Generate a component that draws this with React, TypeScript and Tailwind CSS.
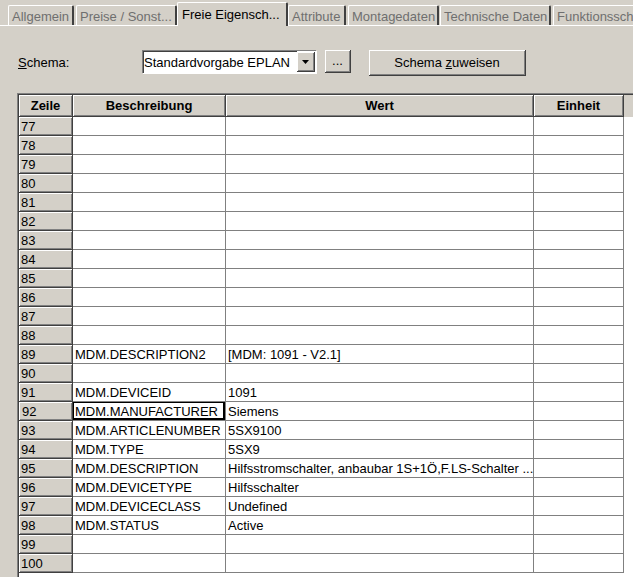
import React from 'react';

type Row = { nr: number; name?: string; value?: string };

const rows: Row[] = [
  ...Array.from({ length: 12 }, (_, i) => ({ nr: 77 + i })),
  { nr: 89, name: 'MDM.DESCRIPTION2', value: '[MDM: 1091 - V2.1]' },
  { nr: 90 },
  { nr: 91, name: 'MDM.DEVICEID', value: '1091' },
  { nr: 92, name: 'MDM.MANUFACTURER', value: 'Siemens' },
  { nr: 93, name: 'MDM.ARTICLENUMBER', value: '5SX9100' },
  { nr: 94, name: 'MDM.TYPE', value: '5SX9' },
  { nr: 95, name: 'MDM.DESCRIPTION', value: 'Hilfsstromschalter, anbaubar 1S+1Ö,F.LS-Schalter ...' },
  { nr: 96, name: 'MDM.DEVICETYPE', value: 'Hilfsschalter' },
  { nr: 97, name: 'MDM.DEVICECLASS', value: 'Undefined' },
  { nr: 98, name: 'MDM.STATUS', value: 'Active' },
  { nr: 99 },
  { nr: 100 },
];

const tabs = [
  { label: 'Allgemein', w: 'w-[66px]', ml: 'ml-[8px]' },
  { label: 'Preise / Sonst...', w: 'w-[101px]', ml: 'ml-[2px]' },
  { label: 'Freie Eigensch...', w: 'w-[111px]', ml: 'ml-0', active: true },
  { label: 'Attribute', w: 'w-[58px]', ml: 'ml-0' },
  { label: 'Montagedaten', w: 'w-[91px]', ml: 'ml-[2px]' },
  { label: 'Technische Daten', w: 'w-[111px]', ml: 'ml-[1px]' },
  { label: 'Funktionsschaltbild', w: 'w-[100px]', ml: 'ml-[2px]' },
];

const raised = 'border-r border-b border-[#404040] shadow-[inset_1px_1px_0_#fff,inset_-1px_-1px_0_#808080]';

const App: React.FC = () => {
  return (
    <div className="w-[633px] h-[577px] overflow-hidden bg-[#d4d0c8] text-[13px] leading-none text-black font-['Liberation_Sans',Arial,sans-serif]">
      {/* Reiter */}
      <div className="flex items-end h-[26px] border-b border-white">
        {tabs.map((t) =>
          t.active ? (
            <div
              key={t.label}
              className={`${t.w} ${t.ml} shrink-0 h-[24px] -mb-px bg-[#d4d0c8] border-t border-l border-white border-r-2 border-r-[#404040] rounded-t-[2px] pl-[4px] pt-[5px] whitespace-nowrap overflow-hidden`}
            >
              {t.label}
            </div>
          ) : (
            <div
              key={t.label}
              className={`${t.w} ${t.ml} shrink-0 h-[20px] border-t border-l border-white border-r-2 border-r-[#404040] rounded-t-[2px] pl-[3px] pt-[4px] text-[#6f6f6f] whitespace-nowrap overflow-hidden`}
            >
              {t.label}
            </div>
          )
        )}
      </div>

      {/* Schema */}
      <div className="flex items-start mt-[24px] h-[26px]">
        <div className="ml-[18px] w-[124px] pt-[6px]">
          <span className="underline">S</span>chema:
        </div>
        <div className="w-[174px] h-[23px] flex bg-white border-t border-l border-[#808080] shadow-[1px_1px_0_#fff]">
          <div className="flex-1 flex items-center border-t border-l border-[#404040]">Standardvorgabe EPLAN</div>
          <div className="w-[18px] h-[20px] mt-px mr-px flex items-center justify-center bg-[#d4d0c8] border-r border-b border-[#404040] shadow-[inset_1px_1px_0_#fff,inset_-1px_-1px_0_#808080]">
            <svg width="7" height="4" viewBox="0 0 7 4">
              <path d="M0 0h7L3.5 4z" fill="#000" />
            </svg>
          </div>
        </div>
        <button className={`ml-[9px] w-[26px] h-[23px] bg-[#d4d0c8] ${raised} flex items-center justify-center pb-[2px]`}>
          ...
        </button>
        <button className={`ml-[18px] w-[157px] h-[26px] bg-[#d4d0c8] ${raised} flex items-center justify-center`}>
          Schema&nbsp;<span className="underline">z</span>uweisen
        </button>
      </div>

      {/* Tabelle */}
      <div className="mt-[17px] ml-[17px] h-[500px] bg-white border-l border-t border-[#808080]">
        <div className="h-full border-l border-t border-[#404040]">
          <div className="flex h-[22px] bg-[#d4d0c8] font-bold">
            <div className={`w-[54px] ${raised} flex items-center justify-center`}>Zeile</div>
            <div className={`w-[153px] ${raised} flex items-center justify-center`}>Beschreibung</div>
            <div className={`w-[308px] ${raised} flex items-center justify-center`}>Wert</div>
            <div className={`w-[90px] ${raised} flex items-center justify-center`}>Einheit</div>
          </div>
          {rows.map((r) => (
            <div key={r.nr} className="flex h-[19px]">
              <div className={`w-[54px] bg-[#d4d0c8] ${raised} flex items-center ${r.nr === 92 ? 'pl-[3px] pt-px' : 'pl-[2px]'}`}>
                {r.nr}
              </div>
              <div
                className={`w-[153px] border-r border-b border-[#808080] flex items-center pl-[2px] whitespace-nowrap overflow-hidden ${
                  r.nr === 92 ? 'shadow-[inset_1px_1px_0_#000,inset_-2px_-2px_0_#000]' : ''
                }`}
              >
                {r.name}
              </div>
              <div className="w-[308px] border-r border-b border-[#808080] flex items-center pl-[2px] whitespace-nowrap overflow-hidden">
                {r.value}
              </div>
              <div className="w-[90px] border-r border-b border-[#808080]" />
            </div>
          ))}
        </div>
      </div>
    </div>
  );
};

export default App;
